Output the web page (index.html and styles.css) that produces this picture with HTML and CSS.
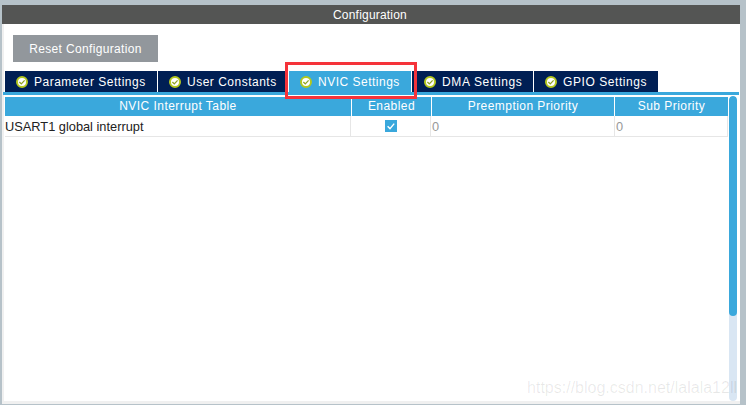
FILE: index.html
```html
<!DOCTYPE html>
<html lang="en">
<head>
<meta charset="utf-8">
<title>Configuration</title>
<link rel="stylesheet" href="styles.css">
</head>
<body>
<main class="panel">
  <header class="title">Configuration</header>
  <div class="toolbar"><button class="reset">Reset Configuration</button></div>
  <nav class="tabs">
    <div class="tab w1"><svg class="ok" viewBox="0 0 12 12"><circle cx="6" cy="6" r="5"/><path d="M3.4 6l1.9 1.9 3.3-3.5"/></svg>Parameter Settings</div>
    <div class="tab w2"><svg class="ok" viewBox="0 0 12 12"><circle cx="6" cy="6" r="5"/><path d="M3.4 6l1.9 1.9 3.3-3.5"/></svg>User Constants</div>
    <div class="tab w3 active"><svg class="ok" viewBox="0 0 12 12"><circle cx="6" cy="6" r="5"/><path d="M3.4 6l1.9 1.9 3.3-3.5"/></svg>NVIC Settings<span class="mark"></span></div>
    <div class="tab w4"><svg class="ok" viewBox="0 0 12 12"><circle cx="6" cy="6" r="5"/><path d="M3.4 6l1.9 1.9 3.3-3.5"/></svg>DMA Settings</div>
    <div class="tab w5"><svg class="ok" viewBox="0 0 12 12"><circle cx="6" cy="6" r="5"/><path d="M3.4 6l1.9 1.9 3.3-3.5"/></svg>GPIO Settings</div>
  </nav>
  <div class="rule"></div>
  <section class="content">
    <div class="table">
      <div class="row head">
        <div class="cell c1">NVIC Interrupt Table</div>
        <div class="cell c2">Enabled</div>
        <div class="cell c3">Preemption Priority</div>
        <div class="cell c4">Sub Priority</div>
      </div>
      <div class="row body">
        <div class="cell c1">USART1 global interrupt</div>
        <div class="cell c2"><svg class="check" viewBox="0 0 12 12"><rect width="12" height="12" fill="#3aa8dc"/><path d="M2.6 6.2l2.4 2.4 4.2-5" fill="none" stroke="#fff" stroke-width="1.4"/></svg></div>
        <div class="cell c3 num">0</div>
        <div class="cell c4 num">0</div>
      </div>
    </div>
    <div class="scroll"><div class="thumb"></div></div>
  </section>
  <div class="mark-text">https://blog.csdn.net/lalala12ll</div>
</main>
</body>
</html>
```
FILE: styles.css
```css
html, body { margin: 0; padding: 0; }
body { width: 746px; height: 405px; background: #b6c2c9; overflow: hidden; font-family: "Liberation Sans", Arial, sans-serif; padding-top: 5px; box-sizing: border-box; }
.panel { position: relative; width: 738px; height: 399px; margin-left: 2px; background: #fff; border-bottom: 3px solid #f0f0f0; box-shadow: inset 2px 0 #f0f0f0; box-sizing: border-box; display: flex; flex-direction: column; }
.title { height: 19px; line-height: 20px; padding-right: 2px; background: #545554; color: #fff; font-size: 12px; letter-spacing: .2px; text-align: center; }
.toolbar { height: 47px; padding: 11px 0 0 11px; box-sizing: border-box; }
.reset { display: block; width: 145px; height: 27px; padding: 0; border: 0; background: #92979c; color: #fff; font: 12px "Liberation Sans", Arial, sans-serif; letter-spacing: .35px; }
.tabs { display: flex; height: 21px; margin-left: 3px; }
.tab { position: relative; display: flex; align-items: center; height: 21px; background: #001f54; color: #fff; font-size: 12px; letter-spacing: .5px; box-sizing: border-box; padding-left: 11px; border-right: 1px solid #fff; white-space: nowrap; }
.w1 { width: 153px; }
.w2 { width: 131px; }
.w3 { width: 123px; }
.w4 { width: 122px; padding-left: 12px; letter-spacing: .65px; }
.w5 { width: 124px; border-right: 0; letter-spacing: .57px; }
.active { background: #3aa8dc; }
.ok { width: 12px; height: 12px; margin-right: 6px; flex: none; }
.ok circle { fill: #fff; stroke: #b4c81e; stroke-width: 2; }
.ok path { fill: none; stroke: #8fa321; stroke-width: 1.3; }
.mark { position: absolute; left: -4px; top: -9px; width: 132px; height: 37px; border: 3px solid #f5333a; box-sizing: border-box; z-index: 1; }
.rule { height: 3px; background: #3aa8dc; margin: 0 1px 0 1px; }
.content { flex: 1; display: flex; min-height: 0; padding-top: 2px; }
.table { margin-left: 3px; width: 723px; flex: none; }
.row { display: flex; }
.head { height: 19px; }
.body { height: 20px; border-bottom: 1px solid #e6e6e6; box-sizing: content-box; }
.cell { box-sizing: border-box; height: 100%; font-size: 12px; line-height: 19px; white-space: nowrap; }
.head .cell { background: #3aa8dc; color: #fff; text-align: center; letter-spacing: .45px; border-right: 1px solid #fff; }
.head .c1 { width: 347px; }
.head .c2 { width: 80px; }
.head .c3 { width: 183px; }
.head .c4 { width: 113px; border-right: 0; }
.body .c1 { width: 346px; }
.body .c2 { width: 80px; display: flex; align-items: center; justify-content: center; }
.body .c3 { width: 184px; }
.body .c4 { width: 113px; }
.body .cell { color: #222; font-size: 12.8px; line-height: 21px; border-right: 1px solid #e6e6e6; padding-left: 0; }
.body .num { color: #999; padding-left: 1px; }
.check { width: 12px; height: 12px; display: block; }
.scroll { margin-left: 1px; width: 8px; height: 305px; background: #d9e6f3; border-radius: 4px; overflow: hidden; margin-top: -1px; }
.thumb { height: 220px; background: #3aa8dc; border-radius: 4px; }
.mark-text { position: absolute; right: 3px; bottom: 4px; color: rgba(0, 0, 0, .09); font: 16px "Liberation Sans", Arial, sans-serif; white-space: nowrap; }
```
